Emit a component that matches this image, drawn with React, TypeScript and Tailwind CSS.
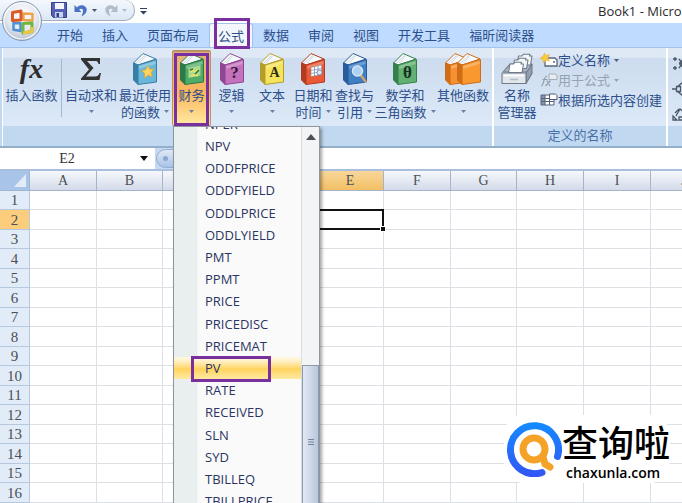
import type { ReactNode } from "react";
import clsx from "clsx";

const TABS = ["开始", "插入", "页面布局", "公式", "数据", "审阅", "视图", "开发工具", "福昕阅读器"];

const FUNCTIONS = [
  "NPER", "NPV", "ODDFPRICE", "ODDFYIELD", "ODDLPRICE", "ODDLYIELD",
  "PMT", "PPMT", "PRICE", "PRICEDISC", "PRICEMAT", "PV", "RATE",
  "RECEIVED", "SLN", "SYD", "TBILLEQ", "TBILLPRICE",
];

const COLUMNS = [
  { name: "A", width: "w-[67px]" },
  { name: "B", width: "w-[66px]" },
  { name: "C", width: "w-[77px]" },
  { name: "D", width: "w-[77px]" },
  { name: "E", width: "w-[67px]" },
  { name: "F", width: "w-[67px]" },
  { name: "G", width: "w-[66px]" },
  { name: "H", width: "w-[67px]" },
  { name: "I", width: "w-[67px]" },
  { name: "J", width: "w-[67px]" },
];

const ROWS = Array.from({ length: 17 }, (_, i) => i + 1);

function Caret({ className }: { className?: string }) {
  return (
    <svg viewBox="0 0 5 3" className={clsx("inline-block h-[3px] w-[5px]", className)}>
      <path d="M0 0h5L2.5 3z" fill="currentColor" />
    </svg>
  );
}

function Book({ face, spine, children }: { face: string; spine: string; children?: ReactNode }) {
  return (
    <svg viewBox="0 0 26 34" className="h-[34px] w-[26px]">
      <path d="M1.5 11 11 1.5 24 7 6 13z" fill="#f7fafc" stroke={spine} strokeLinejoin="round" />
      <path d="M4 11.5 12.500 3.500M7 11.500 13.500 4" stroke="#c3cdd6" strokeWidth=".8" />
      <path d="M1.500 11 6 13v19.500L1.500 28z" fill={spine} stroke={spine} strokeLinejoin="round" />
      <path d="M6 13 24.500 7.500V30L6 32.500z" fill={face} stroke={spine} strokeLinejoin="round" />
      <path d="M7.200 14 23.500 9v3L7.200 17z" fill="#fff" opacity=".25" />
      {children}
    </svg>
  );
}

function OfficeOrb() {
  return (
    <svg viewBox="0 0 42 42" className="h-[42px] w-[42px]">
      <defs>
        <radialGradient id="orb" cx=".5" cy=".35" r=".65">
          <stop offset="0" stopColor="#fff" />
          <stop offset=".6" stopColor="#e3e8f0" />
          <stop offset="1" stopColor="#b3bfd0" />
        </radialGradient>
      </defs>
      <circle cx="21" cy="21" r="19.500" fill="url(#orb)" stroke="#8a98ad" strokeWidth="1" />
      <circle cx="21" cy="21" r="18" fill="none" stroke="#fff" strokeWidth="1.200" opacity=".8" />
      <g fill="none" strokeLinejoin="round">
        <path d="M22.500 13.500l9 .5v6.500l-9-.5z" stroke="#eda24a" strokeWidth="2.400" />
        <path d="M12.500 23l7 .4v7.500l-7-1.200z" stroke="#4f93d4" strokeWidth="2.600" />
        <path d="M11.500 12.500 20 11v9l-8.500.6z" stroke="#dc5a26" strokeWidth="3" />
        <path d="M22 23.500l9-.6v8.500L22 33z" stroke="#6fb544" strokeWidth="3" />
        <path d="M22 33l9-1.600V27" stroke="#efc640" strokeWidth="3" />
      </g>
    </svg>
  );
}

function SaveIcon() {
  return (
    <svg viewBox="0 0 16 16" className="h-4 w-4">
      <path d="M.5.5h15v15h-13l-2-2z" fill="#5561b5" stroke="#343f8e" />
      <path d="M4 1h9v6H4z" fill="#f3f6ff" />
      <path d="M4 10h8v5.500H4z" fill="#c9d2ee" />
      <path d="M5.500 11H8v4H5.500z" fill="#343f8e" />
    </svg>
  );
}

function UndoIcon({ className }: { className?: string }) {
  return (
    <svg viewBox="0 0 14 13" className={clsx("h-[13px] w-[14px]", className)}>
      <path d="M.5 1v7h7L5 5.600C8 3.800 10 5.200 8.500 9.500L7.500 12.500C13.500 10 14.500 3.500 9.800 1.700 7 .8 4.600 1.600 3 3.400z" fill="currentColor" />
    </svg>
  );
}

function NameManagerIcon() {
  return (
    <svg viewBox="0 0 32 32" className="h-8 w-8">
      <g fill="#f4f7fa" stroke="#707b8b" strokeWidth="1.100" strokeLinejoin="round">
        <path d="M2 19 9 11h22l-4 8z" fill="#aab3c0" />
        <path d="M16 12l1.500-9H21l1.500-1.800h6.500L28.500 3H31l-1.500 9z" />
        <path d="M12 15.500l1.500-8.500H17l1.500-1.800H25L24.500 7H27l-1.500 8.500z" />
        <path d="M7.500 19.500 9 11h3.500L14 9.200h6.500L20 11h2.500L21 19.500z" fill="#fff" />
        <path d="M25 20l6-8.500v9L25 30.500z" fill="#939dab" />
        <path d="M1 20h24v10.500H1z" fill="#e3e7ec" />
      </g>
      <path d="M3 22.500h20" stroke="#fff" strokeWidth="1.500" />
      <path d="M9 26.500h8" stroke="#b3bbc7" strokeWidth="1.500" />
    </svg>
  );
}

function DefineNameIcon() {
  return (
    <svg viewBox="0 0 18 14" className="h-[14px] w-[18px]">
      <path d="M5 5h10l2 2v6H5z" fill="#fff" stroke="#59667c" strokeWidth="1.300" />
      <circle cx="14" cy="9" r="1" fill="#59667c" />
      <path d="M4.500 0 6 2.500l3.500-.8L7.800 5 9.500 8 6 7.200 3.500 10 3 6.800 0 5l3-1.500z" fill="#fbc83d" stroke="#e5ac2a" strokeWidth=".5" />
    </svg>
  );
}

function UseInFormulaIcon() {
  return (
    <svg viewBox="0 0 18 14" className="h-[14px] w-[18px]">
      <path d="M9 1h6l2 1.500V6.500H9z" fill="#e8ecf2" stroke="#a3adba" />
      <path d="M1 13c3 0 2.500-10 6-10M2.500 6.500h5M5.500 13l5-5.500M7 7.500l3 5.500" fill="none" stroke="#929cab" strokeWidth="1.200" />
    </svg>
  );
}

function CreateFromSelectionIcon() {
  return (
    <svg viewBox="0 0 18 14" className="h-[14px] w-[18px]">
      <path d="M1 2h13v10H1z" fill="#fff" />
      <path d="M1 2h4v10H1z" fill="#8795ad" />
      <path d="M1 2h13v10H1zM1 5.500h13M1 8.500h13M5 2v10M9.500 2v10" fill="none" stroke="#56647d" />
      <path d="M9.500 1h6L17 2.500V6.500H9.500z" fill="#fff" stroke="#4d5c76" />
    </svg>
  );
}

function RibbonButton({ icon, lines, caret, className }: {
  icon: ReactNode;
  lines: string[];
  caret?: boolean;
  className: string;
}) {
  return (
    <button className={clsx("flex h-[76px] shrink-0 flex-col items-center whitespace-nowrap pt-[2px] text-[13px] leading-[17px]", className)}>
      <span className="flex h-[34px] items-center">{icon}</span>
      <span>{lines[0]}</span>
      <span className="flex h-[17px] items-center">
        {lines[1]}
        {caret && <Caret className={clsx("text-[#6a7fa5]", lines[1] && "ml-1")} />}
      </span>
    </button>
  );
}

function FunctionMenu() {
  return (
    <div className="absolute left-px top-full z-20 flex w-[147px] overflow-hidden border border-[#8e959e] bg-[#fafafa] shadow-[2px_2px_3px_rgba(0,0,0,0.35)]">
      <ul role="menu" className="-mt-[14px] flex-1 bg-linear-to-r from-[#e9eeee] from-[23px] to-[#fafafa] to-[24px] font-['Open_Sans','Noto_Sans',sans-serif] text-[13px]">
        {FUNCTIONS.map((name) => (
          <li key={name} className="relative h-[22px] nth-[5n]:h-[23px]">
            <button
              role="menuitem"
              className={clsx(
                "h-full w-full pl-[31px] text-left leading-[22px] text-[#2b3563]",
                name === "PV" && "bg-linear-to-b from-[#fff6d8] from-10% via-[#ffd45c] via-55% to-[#ffe9a0]",
              )}
            >
              {name}
            </button>
            {name === "PV" && (
              <span className="pointer-events-none absolute -top-px bottom-[-3px] left-[17px] w-[80px] border-[3px] border-[#7a2f9e]" />
            )}
          </li>
        ))}
      </ul>
      <div className="flex w-[18px] flex-col border-l border-[#d9dde2] bg-[#f3f4f5]">
        <div className="flex h-[238px] shrink-0 justify-center pt-[7px]">
          <svg viewBox="0 0 10 6" className="h-[6px] w-[10px]">
            <path d="M5 0l5 6H0z" fill="#4d5157" />
          </svg>
        </div>
        <div className="flex flex-1 justify-center border border-[#8b98ad] bg-linear-to-r from-[#e3e9f3] to-[#b9c7dc] pt-[73px]">
          <svg viewBox="0 0 6 6" className="h-[6px] w-[6px]">
            <path d="M0 .5h6M0 3h6M0 5.500h6" stroke="#7384a0" />
          </svg>
        </div>
      </div>
    </div>
  );
}

function TitleBar() {
  return (
    <div className="flex h-[23px] items-start overflow-hidden bg-white">
      <div className="flex h-[21px] w-[135px] shrink-0 items-center rounded-r-[10px] border-b border-r border-[#a3adbb] bg-linear-to-b from-[#f4f8fd] to-[#dce7f5] pl-[51px]">
        <button aria-label="保存"><SaveIcon /></button>
        <button aria-label="撤消" className="ml-[7px] flex items-center gap-1 text-[#4a72c4]">
          <UndoIcon />
          <Caret className="text-[#46536b]" />
        </button>
        <button aria-label="恢复" className="ml-[7px] flex items-center gap-1 text-[#b1bccb]">
          <UndoIcon className="-scale-x-100" />
          <Caret />
        </button>
      </div>
      <button aria-label="自定义快速访问工具栏" className="ml-[5px] mt-2 shrink-0">
        <svg viewBox="0 0 7 7" className="h-[7px] w-[7px]">
          <path d="M0 .5h7" stroke="#31415e" />
          <path d="M0 3h7L3.500 6.500z" fill="#31415e" />
        </svg>
      </button>
      <h1 className="ml-[451px] shrink-0 whitespace-nowrap font-['Open_Sans','Noto_Sans',sans-serif] text-[13px] leading-[22px] text-[#2a2a2a]">
        Book1 - Micro
      </h1>
    </div>
  );
}

function Tabs() {
  return (
    <nav className="flex h-6 gap-px bg-[#bfdbff] pl-12 text-[13px] leading-6">
      {TABS.map((tab) => (
        <button
          key={tab}
          className={clsx(
            "relative shrink-0",
            tab === "公式" ? "rounded-t-[3px] border-x border-t border-[#a5c2e6] bg-[#f3f7fc] px-[8px] leading-[23px]" : "px-[9px]",
          )}
        >
          {tab}
          {tab === "公式" && (
            <span className="pointer-events-none absolute -bottom-[2px] -top-[6px] left-1 right-[2px] border-[3px] border-[#7a2f9e]" />
          )}
        </button>
      ))}
    </nav>
  );
}

function Ribbon() {
  return (
    <div className="flex h-[101px] border-b-2 border-t border-b-[#93afca] border-t-[#a3c3ec] bg-[#c1d9f0] pl-[2px]">
      <section className="flex w-[492px] shrink-0 flex-col border-l border-r-2 border-white">
        <div className="flex h-[78px] bg-linear-to-b from-[#dfe9f5] from-12% via-[#cddcee] via-13% to-[#dbe9f8] pl-px pt-[2px]">
          <RibbonButton className="w-[55px]" lines={["插入函数"]} icon={
            <span className="font-['Liberation_Serif',serif] text-[28px] font-bold italic leading-[28px] text-[#2d2d2d]">fx</span>
          } />
          <span className="mx-[2px] h-[58px] w-px shrink-0 self-center bg-[#a0b8d3]" />
          <RibbonButton className="w-[54px]" lines={["自动求和"]} caret icon={
            <svg viewBox="0 0 22 24" className="h-6 w-[22px]">
              <path d="M1 1h19v6h-1.500c-.5-2.500-1.500-3-4-3H7l6.500 7L6 19.500h9c2.500 0 3.500-.8 4.500-3.500H21l-1.500 7H1v-1.500l8-9L1 2.500z" fill="#333" />
            </svg>
          } />
          <RibbonButton className="w-[54px]" lines={["最近使用", "的函数"]} caret icon={
            <Book face="#69b7d9" spine="#397ea5">
              <path d="M16 13.500l1.800 3.800 4.200-.2-2.800 3.500 1.300 4.300-4.200-1.800-3.800 3 .3-4.700-3.300-2.700 4.200-1z" fill="#ffd45a" stroke="#dca032" strokeWidth=".7" />
            </Book>
          } />
          <div className="relative h-[76px] shrink-0">
            <RibbonButton
              className="w-[39px] rounded-[2px] border border-t-2 border-[#b99268] bg-linear-to-b from-[#e5b27c] via-[#fbb65c] via-55% to-[#ffe9a0] !pt-0"
              lines={["财务"]}
              caret
              icon={
                <Book face="#50ab68" spine="#2c7a48">
                  <path d="M9.500 16 21.500 13v10.500l-12 2.500z" fill="#a8d98f" />
                  <path d="M11 20l3-2 2 2 4-3M12 24l3-1 4 .5" fill="none" stroke="#e7e26a" strokeWidth="2" />
                  <path d="M11 18l3-1M16 22l4-4" stroke="#227443" strokeWidth="1.500" />
                </Book>
              }
            />
            <span className="pointer-events-none absolute bottom-0 left-[2px] right-[2px] top-[3px] z-30 border-[3px] border-[#7a2f9e]" />
            <FunctionMenu />
          </div>
          <RibbonButton className="w-[41px]" lines={["逻辑"]} caret icon={
            <Book face="#c572bd" spine="#8e4791">
              <text x="15.500" y="26" textAnchor="middle" className="font-['Liberation_Serif',serif] text-[17px] font-bold" fill="#331a38">?</text>
            </Book>
          } />
          <RibbonButton className="w-[40px]" lines={["文本"]} caret icon={
            <Book face="#f4e35b" spine="#b59d2c">
              <text x="15.500" y="25" textAnchor="middle" className="font-['Liberation_Serif',serif] text-[14px] font-bold" fill="#2e2b16">A</text>
            </Book>
          } />
          <RibbonButton className="w-[42px]" lines={["日期和", "时间"]} caret icon={
            <Book face="#ea5a36" spine="#b33a20">
              <path d="M11 15.500 21.500 13v9.500L11 24.500z" fill="#fff" stroke="#8c98ad" strokeWidth=".6" />
              <path d="M11 18.500l10.500-2M11 21.500l10.500-2M14.500 15v9M18 14v9" stroke="#8494b5" strokeWidth=".8" />
              <circle cx="19.500" cy="20.500" r="2.500" fill="#dce9f9" stroke="#5571a5" strokeWidth=".7" />
            </Book>
          } />
          <RibbonButton className="w-[41px]" lines={["查找与", "引用"]} caret icon={
            <Book face="#3f7fc3" spine="#275b99">
              <path d="M18.500 23l5 6.500" stroke="#d5a06c" strokeWidth="2.500" strokeLinecap="round" />
              <circle cx="15.500" cy="19" r="5" fill="#a9d2f3" stroke="#d9e6f3" strokeWidth="1.500" />
            </Book>
          } />
          <RibbonButton className="w-[60px]" lines={["数学和", "三角函数"]} caret icon={
            <Book face="#62b173" spine="#35804b">
              <text x="15.500" y="26" textAnchor="middle" className="font-['Liberation_Serif',serif] text-[17px] font-bold" fill="#17301e">θ</text>
            </Book>
          } />
          <RibbonButton className="w-[56px]" lines={["其他函数"]} caret icon={
            <span className="flex -space-x-[14px]">
              <Book face="#f69030" spine="#cf6c17" />
              <Book face="#f9982f" spine="#cf6c17" />
            </span>
          } />
        </div>
      </section>

      <section className="flex w-[174px] shrink-0 flex-col border-r-2 border-white">
        <div className="flex h-[78px] bg-linear-to-b from-[#dfe9f5] from-12% via-[#cddcee] via-13% to-[#dbe9f8] pt-[2px]">
          <RibbonButton className="w-[46px]" lines={["名称", "管理器"]} icon={<NameManagerIcon />} />
          <div className="flex flex-col whitespace-nowrap text-[13px] leading-5">
            <button className="flex items-center">
              <DefineNameIcon />定义名称<Caret className="ml-1 text-[#4f5f7c]" />
            </button>
            <button disabled className="flex items-center text-[#97a2b2]">
              <UseInFormulaIcon />用于公式<Caret className="ml-1" />
            </button>
            <button className="flex items-center">
              <CreateFromSelectionIcon />根据所选内容创建
            </button>
          </div>
        </div>
        <h2 className="text-center text-[13px] leading-[18px] text-[#4a70a8]">定义的名称</h2>
      </section>

      <section className="min-w-0 flex-1 overflow-hidden">
        <div className="flex h-[78px] flex-col gap-[9px] bg-linear-to-b from-[#dfe9f5] from-12% via-[#cddcee] via-13% to-[#dbe9f8] pl-1 pt-2">
          <svg viewBox="0 0 16 16" className="h-4 w-4 shrink-0" fill="none" stroke="#4b5769" strokeWidth="1.300">
            <path d="M3 1v4M1 3h4M3 10v4M1 12h4M7 3l3 4M7 12l3-4M10 4v3H7M10 11V8H7" />
          </svg>
          <svg viewBox="0 0 16 16" className="h-4 w-4 shrink-0" fill="none" stroke="#4b5769" strokeWidth="1.300">
            <path d="M0 8h5M5 6l6-5M5 10l6 5M4.500 5.500v5h4v-5z" />
          </svg>
          <svg viewBox="0 0 16 16" className="h-4 w-4 shrink-0" fill="none" stroke="#4b5769" strokeWidth="1.300">
            <path d="M1 10v4h4zM4 10l4-7 5 4M3 7l4-4M7 14v-3h6v3z" />
          </svg>
        </div>
      </section>
    </div>
  );
}

function FormulaBar() {
  return (
    <div className="flex h-[23px] border-b-2 border-[#a9bfdd] bg-[#c5d9f1]">
      <div className="flex w-[155px] shrink-0 items-center bg-white">
        <input
          aria-label="名称框"
          defaultValue="E2"
          className="w-[134px] bg-transparent text-center font-['Liberation_Serif',serif] text-[14px] text-[#333] outline-none"
        />
        <button aria-label="名称列表" className="ml-[6px] flex">
          <svg viewBox="0 0 8 5" className="h-[5px] w-2"><path d="M0 0h8L4 5z" fill="#111" /></svg>
        </button>
      </div>
      <span className="m-px h-[19px] w-[60px] shrink-0 rounded-l-full border border-[#93acd0] bg-linear-to-b from-[#dfe9f6] to-[#a9c3e6] p-[6px]">
        <span className="block size-[5px] rounded-full bg-[#8ba7cf]" />
      </span>
      <input aria-label="编辑栏" className="min-w-0 flex-1 bg-white outline-none" />
    </div>
  );
}

function Sheet() {
  return (
    <div className="min-h-0 flex-1 overflow-hidden">
      <table className="w-[718px] min-w-full table-fixed border-separate border-spacing-0 font-['Liberation_Serif',serif] text-[15px] text-[#4c4f55]">
        <thead>
          <tr className="h-5">
            <th className="w-[30px] border-b border-r border-[#9eb6ce] bg-[#a9c4e9] p-0">
              <svg viewBox="0 0 12 13" className="ml-auto mr-[3px] h-[13px] w-3"><path d="M12 0v13H0z" fill="#e3ebf6" /></svg>
            </th>
            {COLUMNS.map(({ name, width }) => (
              <th
                key={name}
                className={clsx(
                  "border-b border-r border-[#a3b4cb] p-0 text-[14px] font-normal leading-[19px]",
                  width,
                  name === "E" ? "bg-linear-to-b from-[#f8d79b] to-[#f2bf62]" : "bg-linear-to-b from-[#f6f8fc] to-[#d3dbe9]",
                )}
              >
                {name}
              </th>
            ))}
          </tr>
        </thead>
        <tbody>
          {ROWS.map((row) => (
            <tr key={row} className="odd:h-[19px] even:h-5">
              <th
                className={clsx(
                  "border-b border-r border-[#b5c8de] p-0 font-normal leading-[18px]",
                  row === 2 ? "bg-[#fbcd7c]" : "bg-[#e2ecf8]",
                )}
              >
                {row}
              </th>
              {COLUMNS.map(({ name }) => (
                <td key={name} className="relative border-b border-r border-[#dcdfe4] bg-white p-0">
                  {name === "E" && row === 2 && (
                    <span className="absolute -inset-px z-10 border-2 border-[#111]">
                      <span className="absolute -bottom-[3px] -right-[3px] size-1 bg-[#111] outline outline-white" />
                    </span>
                  )}
                </td>
              ))}
            </tr>
          ))}
        </tbody>
      </table>
    </div>
  );
}

function Watermark() {
  return (
    <div className="absolute bottom-5 right-3 z-30 flex h-[68px] items-center rounded-[20px] bg-white pl-[2px]">
      <svg viewBox="0 0 56 56" className="h-14 w-14" fill="none" strokeLinecap="round">
        <defs>
          <linearGradient id="ring" x1="0" y1="0" x2="0" y2="1">
            <stop offset="0" stopColor="#1688ff" />
            <stop offset="1" stopColor="#3158f5" />
          </linearGradient>
        </defs>
        <path d="M51.500 35.500A24 24 0 1 0 36 51.500" stroke="url(#ring)" strokeWidth="7" />
        <circle cx="28" cy="28" r="11" stroke="#f5a328" strokeWidth="7" />
        <path d="M37 36l2 7 5 3" stroke="#f5a328" strokeWidth="7" strokeLinejoin="round" />
      </svg>
      <div className="text-black">
        <p className="text-[36px] font-medium leading-[48px]">查询啦</p>
        <p className="pl-1 font-['Open_Sans','Noto_Sans',sans-serif] text-[14px] font-semibold leading-4">chaxunla.com</p>
      </div>
    </div>
  );
}

export default function App() {
  return (
    <div className="relative flex h-screen flex-col overflow-hidden bg-white font-['Noto_Sans_CJK_SC',sans-serif] text-[#2d4f8b]">
      <TitleBar />
      <Tabs />
      <button aria-label="Office 按钮" className="absolute left-px top-0">
        <OfficeOrb />
      </button>
      <Ribbon />
      <FormulaBar />
      <Sheet />
      <Watermark />
    </div>
  );
}
